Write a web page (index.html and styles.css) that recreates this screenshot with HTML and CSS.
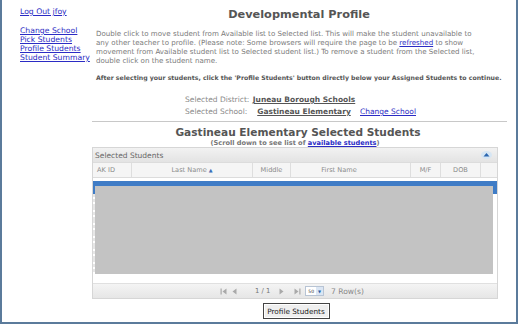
FILE: index.html
```html
<!DOCTYPE html>
<html lang="en">
<head>
    <meta charset="UTF-8">
    <title>Developmental Profile</title>
    <link rel="stylesheet" href="styles.css">
</head>
<body>
<div class="frame">
    <div class="nav">
        <a href="#" class="logout">Log Out jfoy</a>
        <ul class="menu">
            <li><a href="#">Change School</a></li>
            <li><a href="#">Pick Students</a></li>
            <li><a href="#">Profile Students</a></li>
            <li><a href="#">Student Summary</a></li>
        </ul>
    </div>

    <div class="main">
        <h1>Developmental Profile</h1>
        <p class="intro">Double click to move student from Available list to Selected list. This will make the student unavailable to<br>
            any other teacher to profile. (Please note: Some browsers will require the page to be <a href="#">refreshed</a> to show<br>
            movement from Available student list to Selected student list.) To remove a student from the Selected list,<br>
            double click on the student name.</p>
        <p class="note">After selecting your students, click the 'Profile Students' button directly below your Assigned Students to continue.</p>

        <div class="selection">
            <span class="sel-label">Selected District:</span>
            <span class="sel-value">Juneau Borough Schools</span>
            <span></span>
            <span class="sel-label">Selected School:</span>
            <span class="sel-value">Gastineau Elementary</span>
            <a href="#" class="sel-link">Change School</a>
        </div>

        <hr class="divider">

        <h2>Gastineau Elementary Selected Students</h2>
        <div class="scroll-note">(Scroll down to see list of <a href="#">available students</a>)</div>

        <div class="grid">
            <div class="grid-caption">
                <span>Selected Students</span>
                <svg class="collapse" width="11" height="8" viewBox="0 0 11 8">
                    <ellipse cx="5.5" cy="4" rx="5.5" ry="4" fill="#d6e6f4"/>
                    <path d="M2.5 5.5 L5.5 2 L8.5 5.5 Z" fill="#2a66b0"/>
                </svg>
            </div>
            <div class="grid-head">
                <div class="col col-id">AK ID</div>
                <div class="col col-last">Last Name <span class="sort">&#9650;</span></div>
                <div class="col col-mid">Middle</div>
                <div class="col col-first">First Name</div>
                <div class="col col-sex">M/F</div>
                <div class="col col-dob">DOB</div>
                <div class="gutter"></div>
            </div>
            <div class="grid-body">
                <div class="row row-selected"></div>
                <div class="row"></div>
                <div class="row"></div>
                <div class="row"></div>
                <div class="row"></div>
                <div class="row"></div>
                <div class="row"></div>
                <div class="redacted"></div>
            </div>
            <div class="pager">
                <svg class="pg-icon pg-first" width="7" height="7" viewBox="0 0 7 7"><rect x="0.5" y="0.5" width="1.2" height="6" fill="#a9a9a9"/><path d="M6.5 0.5 L2.5 3.5 L6.5 6.5 Z" fill="#a9a9a9"/></svg>
                <svg class="pg-icon pg-prev" width="5" height="7" viewBox="0 0 5 7"><path d="M4.5 0.5 L0.5 3.5 L4.5 6.5 Z" fill="#a9a9a9"/></svg>
                <span class="pg-page">1 / 1</span>
                <svg class="pg-icon pg-next" width="5" height="7" viewBox="0 0 5 7"><path d="M0.5 0.5 L4.5 3.5 L0.5 6.5 Z" fill="#a9a9a9"/></svg>
                <svg class="pg-icon pg-last" width="7" height="7" viewBox="0 0 7 7"><path d="M0.5 0.5 L4.5 3.5 L0.5 6.5 Z" fill="#a9a9a9"/><rect x="5.3" y="0.5" width="1.2" height="6" fill="#a9a9a9"/></svg>
                <span class="pg-select">50 <span class="pg-arrow">&#9660;</span></span>
                <span class="pg-count">7 Row(s)</span>
            </div>
        </div>

        <div class="actions">
            <button type="button" class="profile-button">Profile Students</button>
        </div>
    </div>
</div>
</body>
</html>
```

FILE: styles.css
```css
body {
    margin: 0;
    padding: 0;
    background-color: #fff;
    font-family: "DejaVu Sans", Verdana, sans-serif;
}
a {
    color: #2b2bc4;
}
.frame {
    width: 514px;
    height: 322px;
    border: 2px solid #5b7b9b;
    border-top: none;
    display: flex;
    overflow: hidden;
}
.nav {
    width: 72px;
    padding-left: 18px;
    padding-top: 7px;
    font-size: 7.7px;
    line-height: 9px;
    flex-shrink: 0;
}
.logout {
    display: block;
}
.menu {
    list-style: none;
    margin: 10px 0 0;
    padding: 0;
}
.main {
    width: 420px;
    display: flex;
    flex-direction: column;
}
h1 {
    margin: 8px 0 0;
    padding-right: 6px;
    text-align: center;
    font-size: 11.3px;
    line-height: 14px;
    color: #555;
}
.intro {
    margin: 7px 0 0;
    padding-left: 4px;
    font-size: 7.1px;
    line-height: 9px;
    color: #7a7a7a;
    white-space: nowrap;
}
.note {
    margin: 8px 0 0;
    padding-left: 4px;
    font-size: 6.2px;
    line-height: 9px;
    font-weight: bold;
    color: #555;
    white-space: nowrap;
}
.selection {
    display: grid;
    grid-template-columns: 65px 108px auto;
    row-gap: 3px;
    margin: 13px 0 0 93px;
    font-size: 7.5px;
    line-height: 9px;
}
.sel-label {
    color: #888;
}
.sel-value {
    text-align: center;
    font-weight: bold;
    color: #555;
    text-decoration: underline;
}
.sel-link {
    padding-left: 2px;
}
.divider {
    width: 415px;
    margin: 5px 0 0;
    border: none;
    border-top: 1px solid #c8c8c8;
    height: 0;
}
h2 {
    margin: 4px 0 0;
    padding-right: 8px;
    text-align: center;
    font-size: 10.6px;
    line-height: 13px;
    color: #555;
}
.scroll-note {
    margin-top: 1px;
    text-align: center;
    font-size: 6.6px;
    line-height: 7px;
    font-weight: bold;
    color: #777;
    padding-right: 14px;
}
.grid {
    width: 404px;
    border: 1px solid #d6d6d6;
}
.grid-caption {
    height: 14px;
    display: flex;
    align-items: center;
    justify-content: space-between;
    padding: 0 5px 0 2px;
    background: linear-gradient(#f2f2f2, #e3e3e3);
    font-size: 7.5px;
    color: #666;
}
.collapse {
    display: block;
}
.grid-head {
    display: flex;
    height: 14px;
    border-top: 1px solid #dcdcdc;
    border-bottom: 1px solid #dcdcdc;
    background: #f5f5f5;
    font-size: 6.6px;
    color: #8a8a8a;
}
.col {
    display: flex;
    align-items: center;
    justify-content: center;
    border-right: 1px solid #dedede;
    white-space: nowrap;
}
.col-id { justify-content: flex-start; padding-left: 4px; width: 34px; }
.col-last { width: 120px; }
.col-mid { width: 37px; }
.col-first { width: 96px; padding-right: 23px; }
.col-sex { width: 29px; }
.col-dob { width: 39px; }
.gutter { flex: 1; }
.sort {
    font-size: 5px;
    color: #3a6fb8;
    margin-left: 2px;
}
.grid-body {
    position: relative;
    height: 105px;
    padding-top: 3px;
    box-sizing: border-box;
    background: #fff;
}
.row {
    height: 13px;
    border-left: 3px dotted #e6e6e6;
}
.row-selected {
    background: #3f7cc6;
    border-left: none;
}
.redacted {
    position: absolute;
    left: 2px;
    top: 8px;
    width: 398px;
    height: 88px;
    background: #c3c3c3;
}
.pager {
    height: 14px;
    border-top: 1px solid #e0e0e0;
    background: linear-gradient(#f4f4f4, #e6e6e6);
    display: flex;
    align-items: center;
    padding-left: 127px;
    font-size: 6.6px;
    color: #8a8a8a;
}
.pg-icon {
    display: block;
}
.pg-prev { margin-left: 5px; }
.pg-page {
    font-size: 6.8px;
    color: #777;
    margin-left: 18px;
}
.pg-next { margin-left: 9px; }
.pg-last { margin-left: 10px; }
.pg-select {
    display: flex;
    align-items: center;
    gap: 2px;
    height: 8px;
    margin-left: 4px;
    padding-left: 2px;
    border: 1px solid #b8c4d4;
    background: #fff;
    font-size: 4.5px;
    color: #333;
}
.pg-arrow {
    display: flex;
    align-items: center;
    justify-content: center;
    width: 7px;
    height: 8px;
    background: #dbe6f4;
    color: #2a5fa8;
    font-size: 4px;
}
.pg-count {
    margin-left: 7px;
    font-size: 7.6px;
    color: #888;
}
.actions {
    display: flex;
    justify-content: center;
    margin-top: 4px;
    padding-right: 12px;
}
.profile-button {
    width: 67px;
    height: 16px;
    padding: 0;
    border: 1px solid #444;
    box-shadow: inset 0 0 0 1px #fff;
    background: #efefef;
    font-family: "DejaVu Sans", Verdana, sans-serif;
    font-size: 7.3px;
    color: #222;
}
```
